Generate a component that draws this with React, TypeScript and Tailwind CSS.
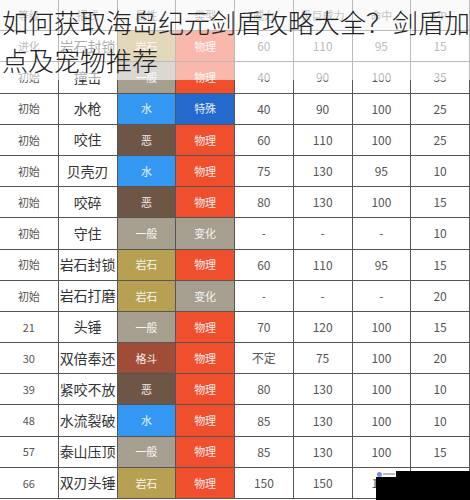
import React from "react";

type Move = {
  lv: string;
  name: string;
  type: string;
  cat: string;
  power: string;
  maxPower: string;
  acc: string;
  pp: string;
};

const typeColor: Record<string, string> = {
  水: "bg-[#3498f2]",
  恶: "bg-[#6e5646]",
  一般: "bg-[#a69e8e]",
  岩石: "bg-[#b8a053]",
  格斗: "bg-[#a04c36]",
};

const catColor: Record<string, string> = {
  物理: "bg-[#f04f2e]",
  特殊: "bg-[#2469cc]",
  变化: "bg-[#a69e8e]",
};

const moves: Move[] = [
  { lv: "进化", name: "岩石封锁", type: "岩石", cat: "物理", power: "60", maxPower: "110", acc: "95", pp: "15" },
  { lv: "初始", name: "撞击", type: "一般", cat: "物理", power: "40", maxPower: "90", acc: "100", pp: "35" },
  { lv: "初始", name: "水枪", type: "水", cat: "特殊", power: "40", maxPower: "90", acc: "100", pp: "25" },
  { lv: "初始", name: "咬住", type: "恶", cat: "物理", power: "60", maxPower: "110", acc: "100", pp: "25" },
  { lv: "初始", name: "贝壳刃", type: "水", cat: "物理", power: "75", maxPower: "130", acc: "95", pp: "10" },
  { lv: "初始", name: "咬碎", type: "恶", cat: "物理", power: "80", maxPower: "130", acc: "100", pp: "15" },
  { lv: "初始", name: "守住", type: "一般", cat: "变化", power: "-", maxPower: "-", acc: "-", pp: "10" },
  { lv: "初始", name: "岩石封锁", type: "岩石", cat: "物理", power: "60", maxPower: "110", acc: "95", pp: "15" },
  { lv: "初始", name: "岩石打磨", type: "岩石", cat: "变化", power: "-", maxPower: "-", acc: "-", pp: "20" },
  { lv: "21", name: "头锤", type: "一般", cat: "物理", power: "70", maxPower: "120", acc: "100", pp: "15" },
  { lv: "30", name: "双倍奉还", type: "格斗", cat: "物理", power: "不定", maxPower: "75", acc: "100", pp: "20" },
  { lv: "39", name: "紧咬不放", type: "恶", cat: "物理", power: "80", maxPower: "130", acc: "100", pp: "10" },
  { lv: "48", name: "水流裂破", type: "水", cat: "物理", power: "85", maxPower: "130", acc: "100", pp: "10" },
  { lv: "57", name: "泰山压顶", type: "一般", cat: "物理", power: "85", maxPower: "130", acc: "100", pp: "15" },
  { lv: "66", name: "双刃头锤", type: "岩石", cat: "物理", power: "150", maxPower: "150", acc: "100", pp: "15" },
];

const headers = ["等级", "招式", "属性", "类型", "威力", "极巨威力", "命中", "PP"];

const cell = "flex items-center justify-center border-r border-b border-[#555] h-[31.2px]";

export default function App() {
  return (
    <div
      className="relative w-[470px] h-[500px] overflow-hidden bg-white"
      style={{ fontFamily: '"Noto Sans CJK SC", "Noto Sans", sans-serif' }}
    >
      <div className="grid grid-cols-8">
        {headers.map((h) => (
          <div key={h} className={`${cell} bg-[#f2f2f4] text-[11px] text-[#666]`}>
            {h}
          </div>
        ))}
        {moves.map((m, i) => (
          <React.Fragment key={i}>
            <div className={`${cell} text-[11px] text-[#555]`}>{m.lv}</div>
            <div className={`${cell} text-[14px] text-[#333]`}>{m.name}</div>
            <div className={`${cell} ${typeColor[m.type]} text-[11px] text-white/90`}>{m.type}</div>
            <div className={`${cell} ${catColor[m.cat]} text-[11px] text-white/90`}>{m.cat}</div>
            <div className={`${cell} text-[12px] text-[#555]`}>{m.power}</div>
            <div className={`${cell} text-[12px] text-[#555]`}>{m.maxPower}</div>
            <div className={`${cell} text-[12px] text-[#555]`}>{m.acc}</div>
            <div className={`${cell} text-[12px] text-[#555]`}>{m.pp}</div>
          </React.Fragment>
        ))}
      </div>

      {/* faded title band */}
      <div className="absolute left-0 top-0 w-full h-[80px] bg-white/60" />
      <div className="absolute left-[2px] top-[3px] text-[26px] leading-[38px] font-light text-[#222]">
        <div className="whitespace-nowrap">如何获取海岛纪元剑盾攻略大全？剑盾加</div>
        <div className="whitespace-nowrap">点及宠物推荐</div>
      </div>

      {/* watermark */}
      <div className="absolute left-[376px] top-[471px] w-[94px] h-[29px] bg-black" />
      <div className="absolute left-[376px] top-[471px] w-[20px] h-[6px] bg-white flex items-center gap-[1px] px-[1px]">
        <div className="w-[5px] h-[5px] rounded-full bg-gradient-to-br from-[#8a6cf0] to-[#4fb0f0]" />
        <div className="flex-1 h-[2px] bg-[#bbb]" />
      </div>
    </div>
  );
}
